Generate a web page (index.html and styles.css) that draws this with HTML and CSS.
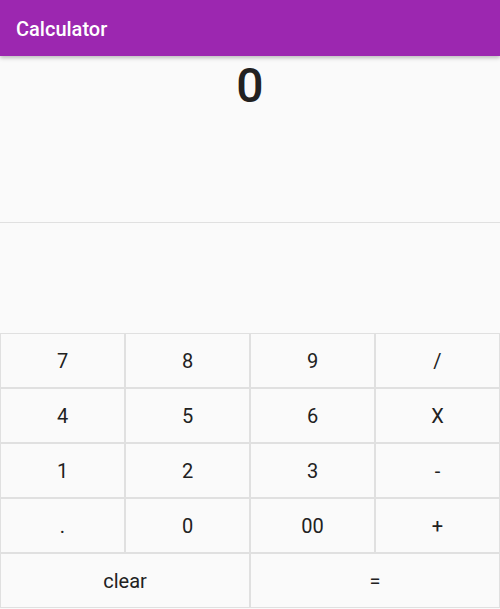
FILE: index.html
```html
<!DOCTYPE html>
<html>
<head>
<meta charset="utf-8">
<link rel="stylesheet" href="styles.css">
</head>
<body>
<header class="appbar"><span class="title">Calculator</span></header>
<main class="app">
  <section class="display">
    <div class="result">0</div>
  </section>
  <section class="history"></section>
  <section class="keys">
    <button class="key">7</button>
    <button class="key">8</button>
    <button class="key">9</button>
    <button class="key">/</button>
    <button class="key">4</button>
    <button class="key">5</button>
    <button class="key">6</button>
    <button class="key">X</button>
    <button class="key">1</button>
    <button class="key">2</button>
    <button class="key">3</button>
    <button class="key">-</button>
    <button class="key">.</button>
    <button class="key">0</button>
    <button class="key">00</button>
    <button class="key">+</button>
    <button class="key wide">clear</button>
    <button class="key wide">=</button>
  </section>
</main>
</body>
</html>
```
FILE: styles.css
```css
* { box-sizing: border-box; }
html, body {
  margin: 0;
  padding: 0;
  height: 100%;
  background: #fafafa;
  font-family: Roboto, "Noto Sans", sans-serif;
  color: #212121;
  overflow: hidden;
}
.appbar {
  height: 56px;
  background: #9c27b0;
  display: flex;
  align-items: center;
  padding: 0 16px;
  box-shadow: 0 2px 4px rgba(0,0,0,0.25);
  position: relative;
  z-index: 1;
}
.title {
  color: #fff;
  font-size: 20px;
  font-weight: 500;
  padding-top: 1px;
}
.app {
  display: flex;
  flex-direction: column;
}
.display {
  height: 167px;
  border-bottom: 1px solid #e0e0e0;
  display: flex;
  justify-content: center;
  padding-top: 2px;
}
.result {
  font-size: 48px;
  font-weight: 500;
  line-height: 56px;
}
.history {
  height: 110px;
}
.keys {
  display: grid;
  grid-template-columns: repeat(4, 125px);
  grid-auto-rows: 55px;
}
.key {
  border: 1px solid #e0e0e0;
  background: #fafafa;
  font-family: Roboto, sans-serif;
  font-size: 20px;
  color: #212121;
  padding: 0;
  margin: 0;
}
.wide {
  grid-column: span 2;
}
```
